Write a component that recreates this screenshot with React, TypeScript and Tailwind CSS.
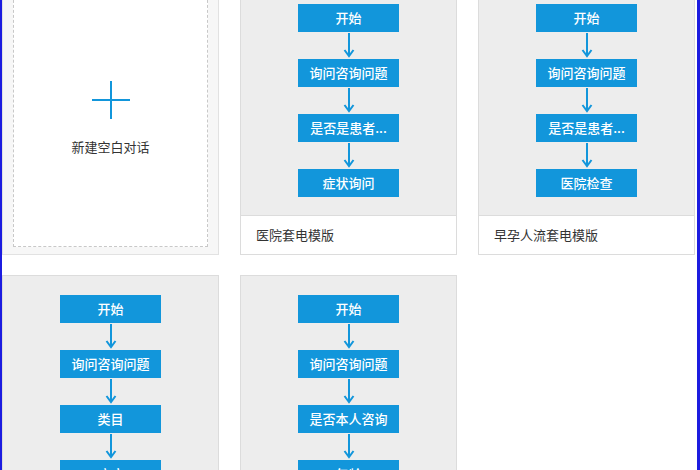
import { Fragment } from "react";

type Template = { id: string; title?: string; steps: string[] };

const templates: Template[] = [
  { id: "hospital", title: "医院套电模版", steps: ["开始", "询问咨询问题", "是否是患者...", "症状询问"] },
  { id: "early", title: "早孕人流套电模版", steps: ["开始", "询问咨询问题", "是否是患者...", "医院检查"] },
  { id: "category", steps: ["开始", "询问咨询问题", "类目", "疾病"] },
  { id: "self", steps: ["开始", "询问咨询问题", "是否本人咨询", "年龄"] },
];

const font = { fontFamily: '"Microsoft YaHei", "Noto Sans CJK SC", "Noto Sans", sans-serif' };

function Arrow() {
  return (
    <svg width="12" height="27" viewBox="0 0 12 27" className="block">
      <line x1="6" y1="1" x2="6" y2="24" stroke="#1296db" strokeWidth="2" />
      <polyline points="1.5,18 6,24 10.5,18" fill="none" stroke="#1296db" strokeWidth="2" />
    </svg>
  );
}

function Flow({ steps }: { steps: string[] }) {
  return (
    <div className="flex flex-col items-center">
      {steps.map((step, index) => (
        <Fragment key={index}>
          {index > 0 ? <Arrow /> : null}
          <div className="flex h-[28px] w-[101px] shrink-0 items-center justify-center bg-[#1296db] text-[13px] font-medium text-white">
            {step}
          </div>
        </Fragment>
      ))}
    </div>
  );
}

function TemplateCard({ template }: { template: Template }) {
  return (
    <div className="flex h-[271px] flex-col border border-[#dcdcdc] bg-white">
      <div className="min-h-0 flex-1 overflow-hidden bg-[#ededed] pt-[19px]">
        <Flow steps={template.steps} />
      </div>
      {template.title ? (
        <div className="flex h-[39px] shrink-0 items-center border-t border-[#dcdcdc] bg-white px-[15px] text-[13px] text-[#333]">
          {template.title}
        </div>
      ) : null}
    </div>
  );
}

function NewCard() {
  return (
    <div className="flex h-[271px] flex-col border border-[#e2e2e2] bg-[#f7f7f7] px-[10px] pb-[7px]">
      <div className="flex flex-1 flex-col items-center justify-center border border-dashed border-[#c8c8c8] bg-white pt-[5px]">
        <svg width="38" height="38" viewBox="0 0 38 38">
          <line x1="19" y1="0" x2="19" y2="38" stroke="#1296db" strokeWidth="2" />
          <line x1="0" y1="19" x2="38" y2="19" stroke="#1296db" strokeWidth="2" />
        </svg>
        <p className="mt-[18px] text-[13px] text-[#333]">新建空白对话</p>
      </div>
    </div>
  );
}

export default function App() {
  return (
    <div className="h-[470px] w-[700px] overflow-hidden border-l-2 border-r-[3px] border-[#1c1ce0] bg-white" style={font}>
      <div className="-mt-[16px] grid grid-cols-[217px_217px_217px] gap-x-[21px] gap-y-[20px]">
        <NewCard />
        <TemplateCard template={templates[0]} />
        <TemplateCard template={templates[1]} />
        <TemplateCard template={templates[2]} />
        <TemplateCard template={templates[3]} />
      </div>
    </div>
  );
}
